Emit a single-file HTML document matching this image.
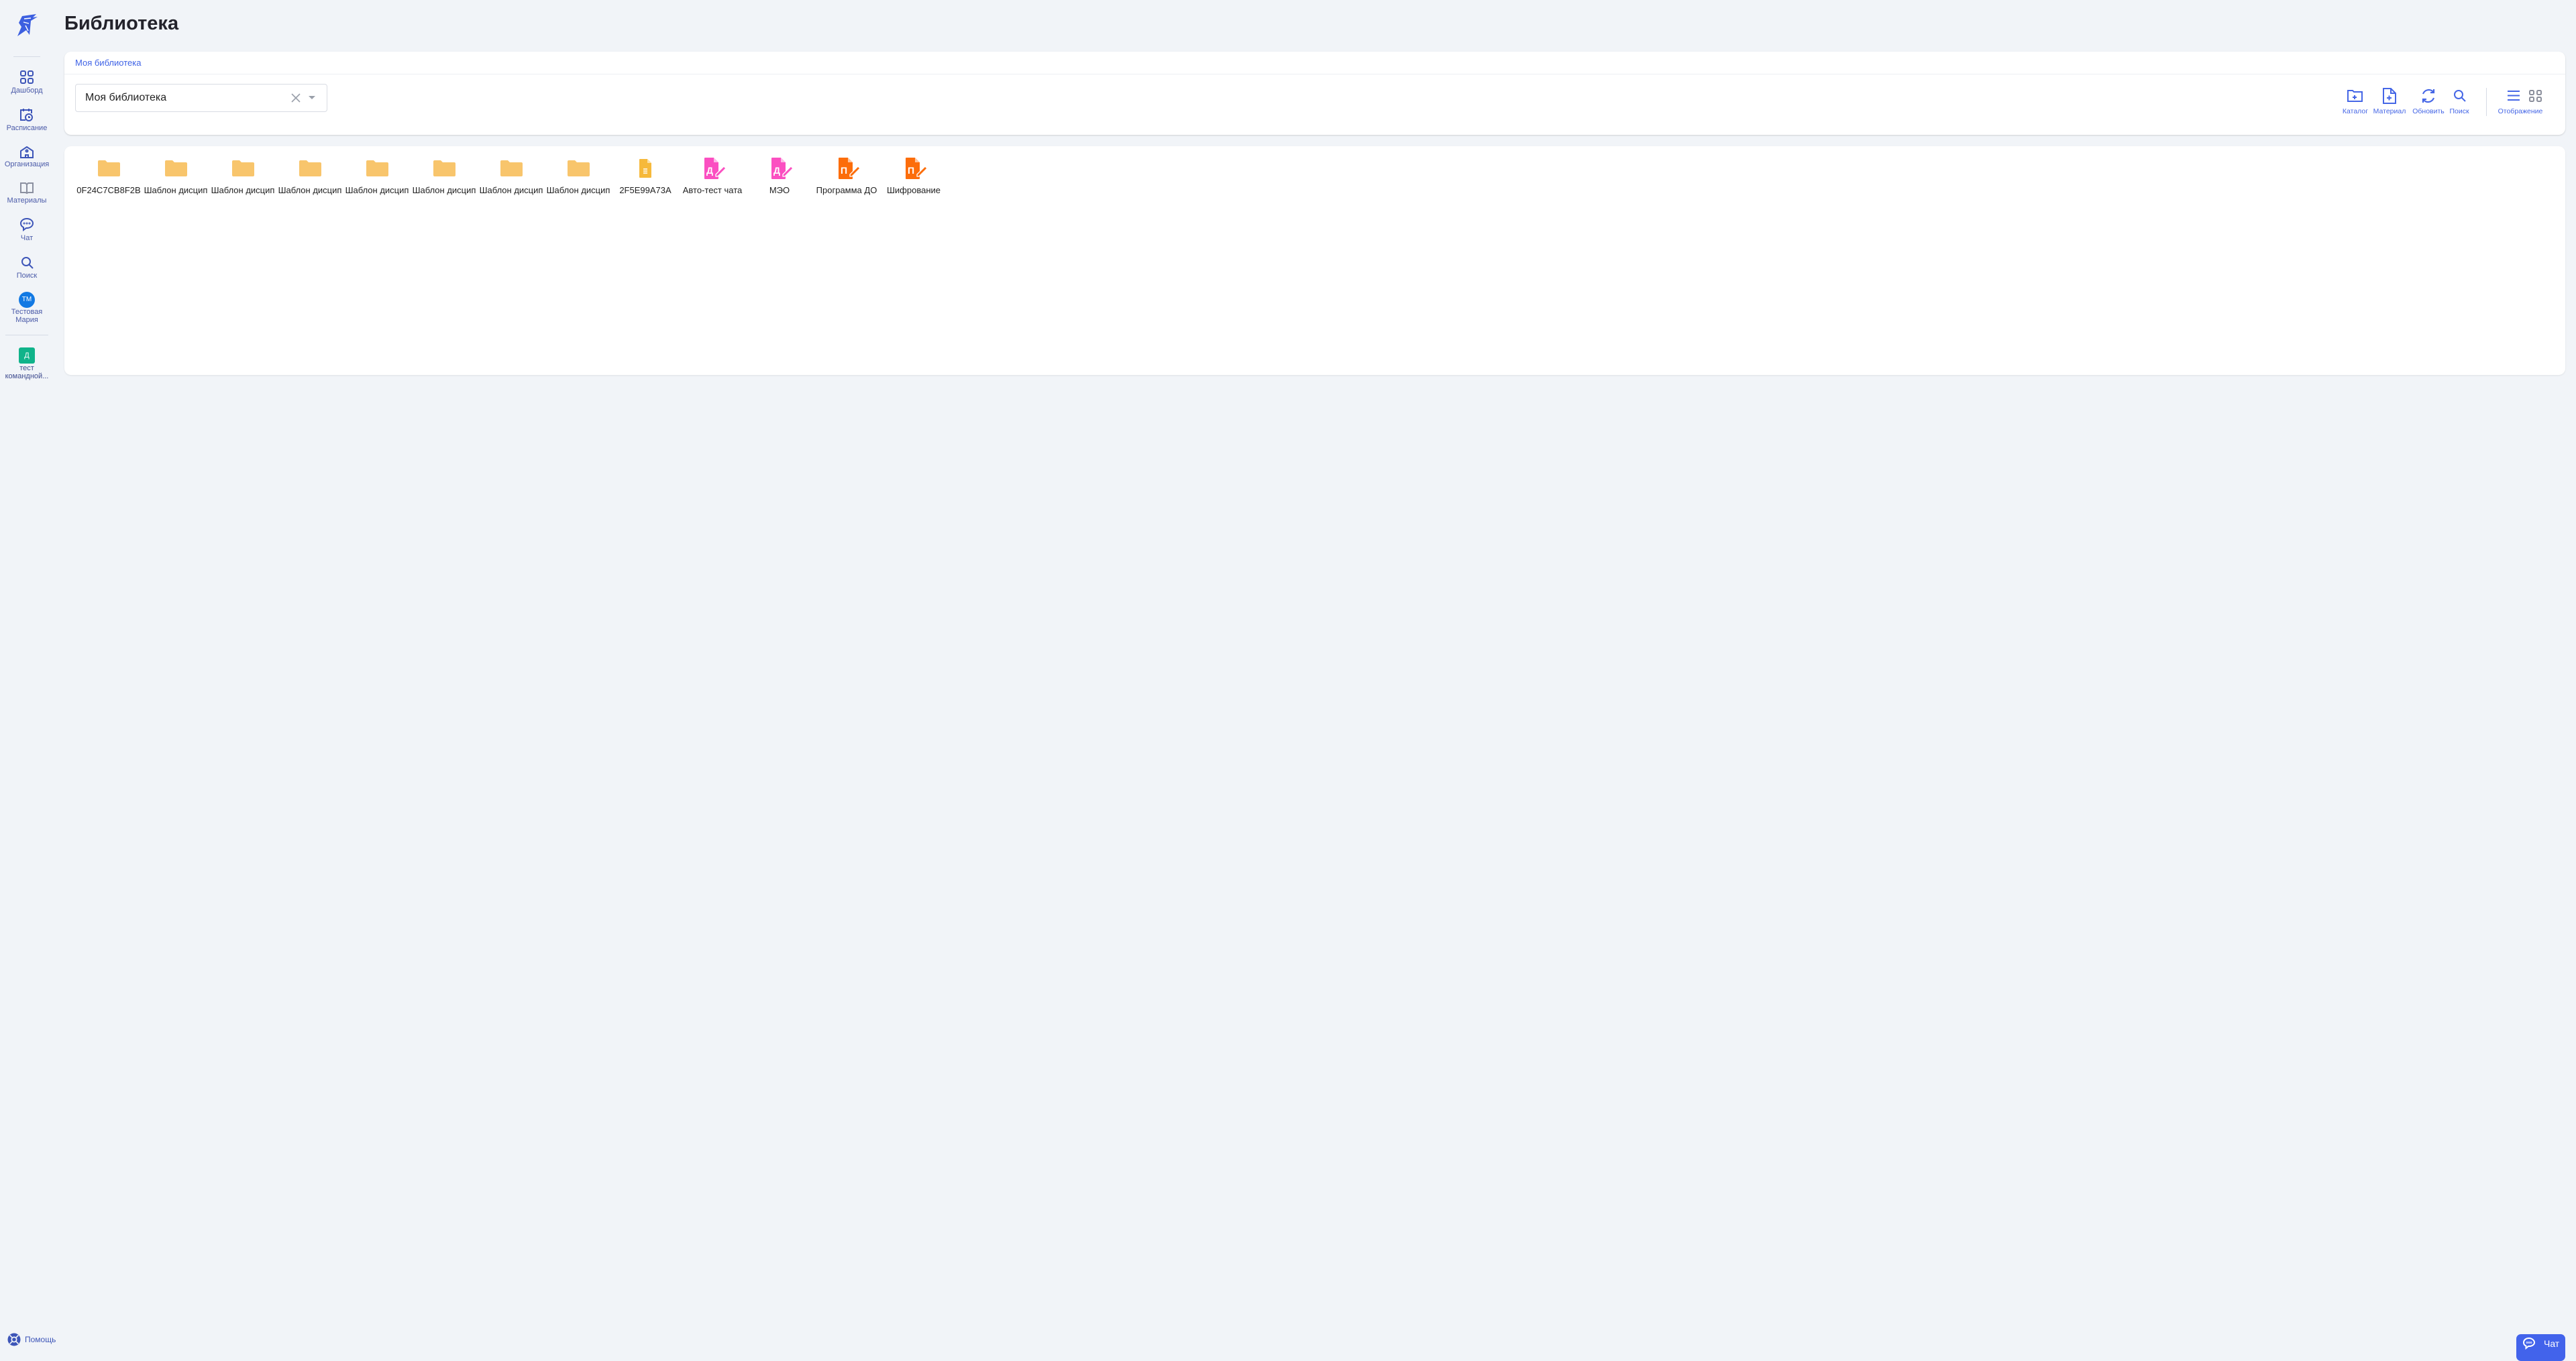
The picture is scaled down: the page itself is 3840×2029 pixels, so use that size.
<!DOCTYPE html><html><head><meta charset="utf-8"><style>
*{box-sizing:border-box;margin:0;padding:0}
body{width:3840px;height:2021px;background:#f1f4f8;font-family:"Liberation Sans",sans-serif;position:relative;overflow:hidden;color:#222}
.a{position:absolute}
.sl{position:absolute;width:80px;text-align:center;font-size:11px;color:#4a5aa8;line-height:12px}
.ic{position:absolute}
.lbl{position:absolute;font-size:13px;color:#222;width:96px;text-align:center;white-space:nowrap;overflow:hidden;line-height:15px}
.tb{position:absolute;font-size:10.5px;color:#4566e6;text-align:center;white-space:nowrap}
</style></head><body>
<!-- logo -->
<svg class="a" style="left:24px;top:20px" width="33" height="34" viewBox="0 0 33 34"><path d="M9 4 L30 1 L25 6 L32 5 L22 11 L20 32 L15 25 L2 34 L8 20 L4 14 Z" fill="#3c5fe0"/><path d="M12 8 L22 7 M11 13 L19 15 M14 18 L18 26" stroke="#fff" stroke-width="1.4"/></svg>
<div class="a" style="left:20px;top:84px;width:40px;height:1px;background:#d6dbe5"></div>
<svg class="ic" style="left:30px;top:105px" width="20" height="20" viewBox="0 0 20 20" fill="none" stroke="#3d55b8" stroke-width="2"><rect x="1" y="1" width="7" height="7" rx="2"/><rect x="12" y="1" width="7" height="7" rx="2"/><rect x="1" y="12" width="7" height="7" rx="2"/><rect x="12" y="12" width="7" height="7" rx="2"/></svg>
<div class="sl" style="left:0;top:129px">Дашборд</div>
<svg class="ic" style="left:30px;top:161px" width="20" height="20" viewBox="0 0 20 20" fill="none" stroke="#3d55b8" stroke-width="2"><path d="M8 18H1V3h16v5M5 1v4M13 1v4"/><circle cx="13" cy="14" r="5"/><path d="M13 12v2h2"/></svg>
<div class="sl" style="left:0;top:185px">Расписание</div>
<svg class="ic" style="left:30px;top:218px" width="20" height="18" viewBox="0 0 20 18" fill="none" stroke="#3d55b8" stroke-width="2"><path d="M1 17V7L10 1l9 6v10z"/><circle cx="10" cy="7" r="1.5"/><path d="M8 17v-4h4v4"/></svg>
<div class="sl" style="left:-5px;width:90px;top:239px">Организация</div>
<svg class="ic" style="left:30px;top:271px" width="20" height="19" viewBox="0 0 20 19" fill="none" stroke="#8b90a0" stroke-width="2"><path d="M1 2h7l2 2 2-2h7v14h-7l-2 1-2-1H1zM10 4v13"/></svg>
<div class="sl" style="left:0;top:293px">Материалы</div>
<svg class="ic" style="left:30px;top:325px" width="20" height="20" viewBox="0 0 20 20" fill="none" stroke="#3d55b8" stroke-width="2"><path d="M10 1C5 1 1 4 1 8c0 3 2 5 4 6v4l4-3h1c5 0 9-3 9-7s-4-7-9-7z"/><circle cx="6" cy="8" r=".5"/><circle cx="10" cy="8" r=".5"/><circle cx="14" cy="8" r=".5"/></svg>
<div class="sl" style="left:0;top:349px">Чат</div>
<svg class="ic" style="left:31px;top:382px" width="19" height="19" viewBox="0 0 19 19" fill="none" stroke="#3d55b8" stroke-width="2"><circle cx="8" cy="8" r="6"/><path d="M12.5 12.5L18 18"/></svg>
<div class="sl" style="left:0;top:405px">Поиск</div>
<div class="a" style="left:28px;top:435px;width:24px;height:24px;border-radius:50%;background:#1279e3;color:#fff;font-size:10px;text-align:center;line-height:24px">ТМ</div>
<div class="sl" style="left:0;top:459px">Тестовая<br>Мария</div>
<div class="a" style="left:8px;top:499px;width:64px;height:1px;background:#d6dbe5"></div>
<div class="a" style="left:28px;top:518px;width:24px;height:24px;border-radius:3px;background:#10b38a;color:#fff;font-size:11px;text-align:center;line-height:24px">Д</div>
<div class="sl" style="left:-5px;width:90px;top:543px;color:#3d4a8e">тест<br>командной...</div>
<!-- help -->
<svg class="ic" style="left:11px;top:1987px" width="20" height="20" viewBox="0 0 20 20"><circle cx="10" cy="10" r="9.5" fill="#3d55b8"/><circle cx="10" cy="10" r="4.5" fill="#f1f4f8"/><circle cx="10" cy="10" r="2.8" fill="#3d55b8"/><path d="M3.5 3.5l3.5 3.5M16.5 3.5L13 7M3.5 16.5L7 13M16.5 16.5L13 13" stroke="#f1f4f8" stroke-width="1.6"/></svg>
<div class="a" style="left:37px;top:1990px;font-size:12px;color:#3d55b8">Помощь</div>
<div class="a" style="left:3751px;top:1989px;width:73px;height:40px;border-radius:7px;background:#4263eb;color:#fff;font-size:14px"><svg class="a" style="left:9px;top:4px" width="20" height="20" viewBox="0 0 20 20" fill="none" stroke="#fff" stroke-width="2"><path d="M10 2C5 2 2 5 2 8.5c0 2.5 1.5 4.2 3.5 5V17l3.5-3h1c4.5 0 8-2.5 8-5.5S14.5 2 10 2z"/><circle cx="7" cy="8.5" r=".4"/><circle cx="10" cy="8.5" r=".4"/><circle cx="13" cy="8.5" r=".4"/></svg><span class="a" style="left:41px;top:6px">Чат</span></div>
<!-- title -->
<div class="a" style="left:96px;top:17px;font-size:29px;font-weight:bold;color:#23232b;line-height:36px">Библиотека</div>
<!-- card1 -->
<div class="a" style="left:96px;top:77px;width:3728px;height:124px;background:#fff;border-radius:10px;box-shadow:0 1px 2px rgba(0,0,0,.15)"></div>
<div class="a" style="left:112px;top:86px;font-size:13px;color:#3f63e6;line-height:16px">Моя библиотека</div>
<div class="a" style="left:96px;top:110px;width:3728px;height:1px;background:#eceef2"></div>
<div class="a" style="left:112px;top:125px;width:376px;height:42px;border:1px solid #d9dce3;border-radius:4px"></div>
<div class="a" style="left:127px;top:136px;font-size:16px;color:#222;line-height:20px">Моя библиотека</div>
<svg class="a" style="left:433px;top:138px" width="16" height="16" viewBox="0 0 16 16" stroke="#9aa0aa" stroke-width="1.6"><path d="M2 2l12 12M14 2L2 14"/></svg>
<div class="a" style="left:460px;top:143px;border-left:5px solid transparent;border-right:5px solid transparent;border-top:5px solid #9aa0aa"></div>
<!-- toolbar -->
<svg class="ic" style="left:3499px;top:133px" width="24" height="20" viewBox="0 0 24 20" fill="none" stroke="#4566e6" stroke-width="2"><path d="M1 2h7l2 2h12v14H1z"/><path d="M8 12h6M11 9v6"/></svg>
<div class="tb" style="left:3490px;top:160px;width:42px">Каталог</div>
<svg class="ic" style="left:3552px;top:131px" width="20" height="24" viewBox="0 0 20 24" fill="none" stroke="#4566e6" stroke-width="2"><path d="M1 1h11l7 7v15H1z"/><path d="M12 1v7h7M6 15h7M9.5 11.5v7"/></svg>
<div class="tb" style="left:3535px;top:160px;width:54px">Материал</div>
<svg class="ic" style="left:3607px;top:131px" width="26" height="24" viewBox="0 0 26 24" fill="none" stroke="#4566e6" stroke-width="2.2"><path d="M5 9A9 9 0 0 1 21 7M21 15A9 9 0 0 1 5 17"/><path d="M21 2v5h-5M5 22v-5h5"/></svg>
<div class="tb" style="left:3594px;top:160px;width:52px">Обновить</div>
<svg class="ic" style="left:3657px;top:133px" width="19" height="19" viewBox="0 0 19 19" fill="none" stroke="#4566e6" stroke-width="2"><circle cx="8" cy="8" r="6"/><path d="M12.5 12.5L18 18"/></svg>
<div class="tb" style="left:3648px;top:160px;width:36px">Поиск</div>
<div class="a" style="left:3706px;top:131px;width:1px;height:42px;background:#d6dbe5"></div>
<svg class="ic" style="left:3737px;top:134px" width="20" height="17" viewBox="0 0 20 17" stroke="#4566e6" stroke-width="2"><path d="M1 2h18M1 8.5h18M1 15h18"/></svg>
<svg class="ic" style="left:3770px;top:134px" width="19" height="18" viewBox="0 0 19 18" fill="none" stroke="#8b8f9c" stroke-width="2"><rect x="1" y="1" width="6" height="6" rx="1.5"/><rect x="12" y="1" width="6" height="6" rx="1.5"/><rect x="1" y="11" width="6" height="6" rx="1.5"/><rect x="12" y="11" width="6" height="6" rx="1.5"/></svg>
<div class="tb" style="left:3722px;top:160px;width:70px">Отображение</div>
<!-- card2 -->
<div class="a" style="left:96px;top:218px;width:3728px;height:341px;background:#fff;border-radius:10px;box-shadow:0 1px 2px rgba(0,0,0,.08)"></div>
<div id="items"></div>
<script>
var names=["0F24C7CB8F2B","Шаблон дисцип","Шаблон дисцип","Шаблон дисцип","Шаблон дисцип","Шаблон дисцип","Шаблон дисцип","Шаблон дисцип","2F5E99A73A","Авто-тест чата","МЭО","Программа ДО","Шифрование"];
var h="";
names.forEach(function(n,i){var cx=162+i*100;var ic;
if(i<8)ic='<svg class="ic" style="left:'+(cx-16)+'px;top:239px" width="33" height="24" viewBox="0 0 33 24"><path d="M2 0h9l3 3h17a2 2 0 0 1 2 2v17a2 2 0 0 1-2 2H2a2 2 0 0 1-2-2V2a2 2 0 0 1 2-2z" fill="#f8c56c"/></svg>';
else if(i==8)ic='<svg class="ic" style="left:'+(cx-9)+'px;top:237px" width="18" height="28" viewBox="0 0 18 28"><path d="M1 0h11l6 6v21a1 1 0 0 1-1 1H1a1 1 0 0 1-1-1V1a1 1 0 0 1 1-1z" fill="#f6b93b"/><path d="M12 0v6h6z" fill="#fbe0a8"/><path d="M6 15h6M6 18h6M6 21h6" stroke="#fff" stroke-width="1.5"/></svg>';
else{var c=i<11?"#fb4fc1":"#fc6d0a";var L=i<11?"Д":"П";ic='<svg class="ic" style="left:'+(cx-12)+'px;top:235px" width="34" height="32" viewBox="0 0 34 32"><path d="M1 0h13l7 7v24a1 1 0 0 1-1 1H1a1 1 0 0 1-1-1V1a1 1 0 0 1 1-1z" fill="'+c+'"/><path d="M14 0v7h7z" fill="#fff" opacity=".6"/><text x="3" y="24" font-size="14" font-family=\'Liberation Sans\' fill="#fff" font-weight="bold">'+L+'</text><path d="M17 25l12-12 3 3-12 12h-3z" fill="'+c+'" stroke="#fff" stroke-width="1.3"/></svg>';}
h+=ic+'<div class="lbl" style="left:'+(cx-48)+'px;top:276px">'+n+'</div>';});
document.getElementById("items").innerHTML=h;
</script>
</body></html>
